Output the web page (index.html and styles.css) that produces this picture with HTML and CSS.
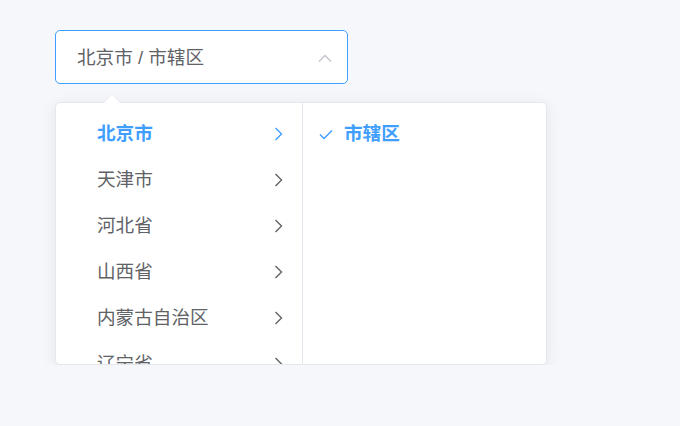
FILE: index.html
```html
<!DOCTYPE html>
<html lang="zh-CN">
<head>
<meta charset="utf-8">
<link rel="stylesheet" href="styles.css">
</head>
<body>
<div class="cascader">
  <div class="input">
    <span class="value">北京市 / 市辖区</span>
    <svg class="caret" width="14" height="8" viewBox="0 0 14 8"><path d="M1 7.5 L7 1.5 L13 7.5" fill="none" stroke="#c0c4cc" stroke-width="1.3"/></svg>
  </div>
  <div class="dropdown">
    <div class="pointer"></div>
    <div class="menu first">
      <div class="item active"><span class="label">北京市</span><svg class="arrow" width="9" height="14" viewBox="0 0 9 14"><path d="M1.5 1 L7.5 7 L1.5 13" fill="none" stroke="currentColor" stroke-width="1.4"/></svg></div>
      <div class="item"><span class="label">天津市</span><svg class="arrow" width="9" height="14" viewBox="0 0 9 14"><path d="M1.5 1 L7.5 7 L1.5 13" fill="none" stroke="currentColor" stroke-width="1.4"/></svg></div>
      <div class="item"><span class="label">河北省</span><svg class="arrow" width="9" height="14" viewBox="0 0 9 14"><path d="M1.5 1 L7.5 7 L1.5 13" fill="none" stroke="currentColor" stroke-width="1.4"/></svg></div>
      <div class="item"><span class="label">山西省</span><svg class="arrow" width="9" height="14" viewBox="0 0 9 14"><path d="M1.5 1 L7.5 7 L1.5 13" fill="none" stroke="currentColor" stroke-width="1.4"/></svg></div>
      <div class="item"><span class="label">内蒙古自治区</span><svg class="arrow" width="9" height="14" viewBox="0 0 9 14"><path d="M1.5 1 L7.5 7 L1.5 13" fill="none" stroke="currentColor" stroke-width="1.4"/></svg></div>
      <div class="item"><span class="label">辽宁省</span><svg class="arrow" width="9" height="14" viewBox="0 0 9 14"><path d="M1.5 1 L7.5 7 L1.5 13" fill="none" stroke="currentColor" stroke-width="1.4"/></svg></div>
    </div>
    <div class="menu second">
      <div class="item leaf active"><svg class="check" width="14" height="11" viewBox="0 0 14 11"><path d="M1 5.5 L5 9.5 L13 1.5" fill="none" stroke="currentColor" stroke-width="1.4"/></svg><span class="label">市辖区</span></div>
    </div>
  </div>
</div>
</body>
</html>
```
FILE: styles.css
```css
html, body {
  margin: 0;
  background: #f5f7fa;
  font-family: "Helvetica Neue", "Liberation Sans", "Noto Sans CJK SC", sans-serif;
}
body {
  padding: 30px 0 0 55px;
}
.cascader {
  width: 293px;
}
.input {
  box-sizing: border-box;
  height: 54px;
  border: 1px solid #409eff;
  border-radius: 5px;
  background: #fff;
  display: flex;
  align-items: center;
  padding: 0 15px 0 21px;
  font-size: 18.6px;
  color: #606266;
}
.value {
  flex: 1;
  line-height: 1;
  margin-top: 3px;
}
.caret {
  display: block;
  margin-top: 1px;
}
.dropdown {
  position: relative;
  margin-top: 18px;
  width: 492px;
  height: 263px;
  box-sizing: border-box;
  background: #fff;
  border: 1px solid #e4e7ed;
  border-radius: 5px;
  box-shadow: 0 3px 16px rgba(0, 0, 0, 0.08);
  display: flex;
}
.pointer {
  position: absolute;
  top: -8px;
  left: 48px;
  width: 0;
  height: 0;
  border-left: 8px solid transparent;
  border-right: 8px solid transparent;
  border-bottom: 8px solid #fff;
  filter: drop-shadow(0 -1px 0 #eef0f4);
}
.menu {
  box-sizing: border-box;
  padding-top: 8px;
  overflow: hidden;
  border-radius: 5px;
}
.menu.first {
  width: 247px;
  border-right: 1px solid #e4e7ed;
  border-radius: 5px 0 0 5px;
}
.menu.second {
  flex: 1;
}
.item {
  height: 46px;
  display: flex;
  align-items: center;
  font-size: 18.6px;
  color: #606266;
}
.label {
  line-height: 1;
  margin-top: 1px;
}
.menu.first .item {
  padding: 0 19px 0 41px;
  justify-content: space-between;
}
.item .arrow {
  color: #606266;
  display: block;
}
.item.active {
  color: #409eff;
  font-weight: bold;
}
.item.active .arrow {
  color: #409eff;
}
.item.leaf {
  padding-left: 16px;
}
.check {
  display: block;
  margin-right: 11px;
  color: #409eff;
}
```
